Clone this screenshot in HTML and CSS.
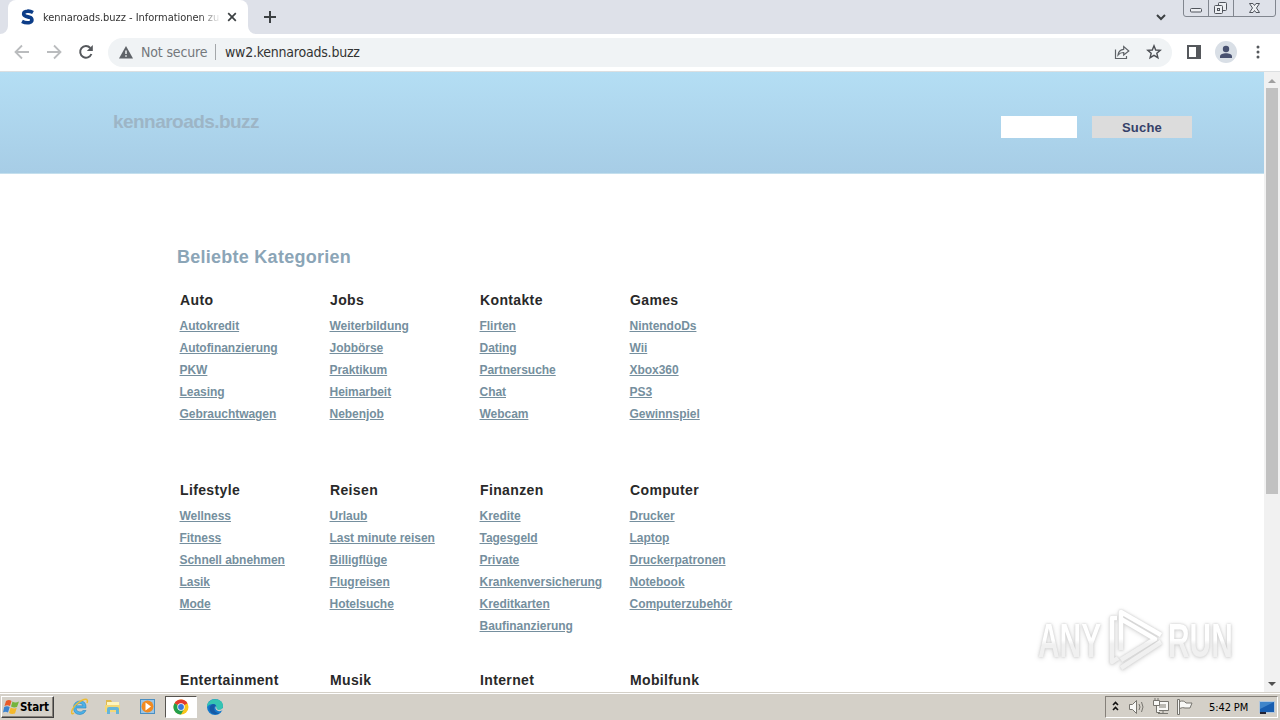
FILE: index.html
```html
<!DOCTYPE html>
<html lang="de">
<head>
<meta charset="utf-8">
<title>kennaroads.buzz - Informationen zum Thema</title>
<link rel="stylesheet" href="styles.css">
</head>
<body>
<div class="tabstrip">
  <div class="tab">
    <svg class="tab-foot left" width="8" height="8"><path d="M8 0V8H0A8 8 0 0 0 8 0Z" fill="#fff"/></svg>
    <svg class="tab-foot right" width="8" height="8"><path d="M0 0V8H8A8 8 0 0 1 0 0Z" fill="#fff"/></svg>
    <svg class="favicon" width="16" height="16" viewBox="0 0 16 16"><path d="M13 3.500C11 2.400 9 2 7.200 2.200C4.700 2.400 3.500 3.600 3.700 5.300C4 7.600 7 7.600 9.500 8.200C12.500 9 12.800 12.500 9.800 13.400C7.500 14 4.500 13.600 2 12.300" fill="none" stroke="#0c3d88" stroke-width="3.600"/></svg>
    <span class="tab-title">kennaroads.buzz - Informationen zu</span>
    <svg class="tab-close" width="10" height="10" viewBox="0 0 10 10"><path d="M1.200 1.200 8.800 8.800M8.800 1.200 1.200 8.800" stroke="#3c4043" stroke-width="1.700"/></svg>
  </div>
  <svg class="newtab" width="12" height="12" viewBox="0 0 12 12"><path d="M6 0V12M0 6H12" stroke="#3c4043" stroke-width="2"/></svg>
  <svg class="chevron" width="10" height="7" viewBox="0 0 10 7"><path d="M1 1 5 5 9 1" fill="none" stroke="#3c4043" stroke-width="2"/></svg>
  <svg class="winbuttons" width="94" height="18" viewBox="0 0 94 18"><path d="M.5 0V14Q.5 16.500 3 16.500H90Q92.500 16.500 92.500 14V0M25.500 0V16M50.500 0V16" fill="none" stroke="#81868f"/><g fill="#eceef2" stroke="#50545c"><rect x="7.500" y="8.500" width="11" height="3.500" rx="1"/><rect x="35.500" y="2.500" width="8" height="8" rx="1"/><rect x="31.500" y="5.500" width="8" height="8" rx="1"/><rect x="34.500" y="8.500" width="2" height="2"/><path d="M66.500 3.500H70L71.500 5.500 73 3.500H76.500L73.500 8 76.500 12.500H73L71.500 10.500 70 12.500H66.500L69.500 8Z"/></g></svg>
</div>
<div class="toolbar">
  <svg width="16" height="16" viewBox="0 0 16 16"><path d="M15 8H2M8 1.500 1.500 8 8 14.500" fill="none" stroke="#babcbe" stroke-width="1.800"/></svg>
  <svg width="16" height="16" viewBox="0 0 16 16"><path d="M1 8H14M8 1.500 14.500 8 8 14.500" fill="none" stroke="#babcbe" stroke-width="1.800"/></svg>
  <svg width="16" height="16" viewBox="0 0 16 16"><path d="M13.400 10A5.800 5.800 0 1 1 12.300 4" fill="none" stroke="#55585c" stroke-width="2"/><path d="M14.800 1V7H8.800Z" fill="#55585c"/></svg>
  <div class="omnibox">
    <svg class="warn" width="14" height="13" viewBox="0 0 14 13"><path d="M7 0 14 12.500H0Z" fill="#5f6368"/><path d="M7 4.500V8M7 9.200V10.800" stroke="#f1f3f4" stroke-width="1.500"/></svg>
    <span class="insecure">Not secure</span><i class="sep"></i><span class="url">ww2.kennaroads.buzz</span>
    <svg class="share" width="16" height="16" viewBox="0 0 16 16"><path d="M1.500 5.500V14.500H12.500V12M4 11C4.500 7.500 6.500 5.500 9.700 5.300V2.500L14.800 7 9.700 11V8.500C7.300 8.400 5.500 9.200 4 11Z" fill="none" stroke="#5f6368" stroke-width="1.200"/></svg>
    <svg class="star" width="16" height="16" viewBox="0 0 16 16"><path d="M8 1.800 9.700 6 14.200 6.300 10.800 9.200 11.900 13.700 8 11.300 4.100 13.700 5.200 9.200 1.800 6.300 6.300 6Z" fill="none" stroke="#4c4f54" stroke-width="1.400"/></svg>
  </div>
  <svg class="panel" width="14" height="14" viewBox="0 0 14 14"><path d="M1 1H13V13H1Z" fill="none" stroke="#55585c" stroke-width="2"/><path d="M9 0H14V14H9Z" fill="#55585c"/></svg>
  <svg class="avatar" width="22" height="22" viewBox="0 0 22 22"><circle cx="11" cy="11" r="11" fill="#d9dfe6"/><circle cx="11" cy="8" r="3.200" fill="#485170"/><path d="M5 17V15.500C5 11.200 17 11.200 17 15.500V17Z" fill="#485170"/></svg>
  <svg class="dots" width="4" height="14" viewBox="0 0 4 14"><g fill="#55585c"><circle cx="2" cy="2" r="1.500"/><circle cx="2" cy="7" r="1.500"/><circle cx="2" cy="12" r="1.500"/></g></svg>
</div>
<div class="viewport">
  <main class="page">
    <header class="hero"><div class="domain">kennaroads.buzz</div><div class="search"><input class="query" aria-label="Suche"><button class="submit">Suche</button></div></header>
    <h1 class="title">Beliebte Kategorien</h1>
    <div class="categories">
      <section><h2>Auto</h2><a>Autokredit</a><a>Autofinanzierung</a><a>PKW</a><a>Leasing</a><a>Gebrauchtwagen</a></section>
      <section><h2>Jobs</h2><a>Weiterbildung</a><a>Jobbörse</a><a>Praktikum</a><a>Heimarbeit</a><a>Nebenjob</a></section>
      <section><h2>Kontakte</h2><a>Flirten</a><a>Dating</a><a>Partnersuche</a><a>Chat</a><a>Webcam</a></section>
      <section><h2>Games</h2><a>NintendoDs</a><a>Wii</a><a>Xbox360</a><a>PS3</a><a>Gewinnspiel</a></section>
      <section><h2>Lifestyle</h2><a>Wellness</a><a>Fitness</a><a>Schnell abnehmen</a><a>Lasik</a><a>Mode</a></section>
      <section><h2>Reisen</h2><a>Urlaub</a><a>Last minute reisen</a><a>Billigflüge</a><a>Flugreisen</a><a>Hotelsuche</a></section>
      <section><h2>Finanzen</h2><a>Kredite</a><a>Tagesgeld</a><a>Private</a><a>Krankenversicherung</a><a>Kreditkarten</a><a>Baufinanzierung</a></section>
      <section><h2>Computer</h2><a>Drucker</a><a>Laptop</a><a>Druckerpatronen</a><a>Notebook</a><a>Computerzubehör</a></section>
      <section><h2>Entertainment</h2></section><section><h2>Musik</h2></section><section><h2>Internet</h2></section><section><h2>Mobilfunk</h2></section>
    </div>
  </main>
  <div class="scrollbar">
    <svg width="16" height="16"><path d="M4 11 8 7 12 11Z" fill="#a0a0a0"/></svg>
    <div class="thumb"></div>
    <svg class="down" width="16" height="16"><path d="M4 6 8 10 12 6Z" fill="#505050"/></svg>
  </div>
  <div class="watermark">
    <span>ANY</span>
    <svg width="60" height="66" viewBox="0 0 60 66"><defs><linearGradient id="fade" gradientUnits="userSpaceOnUse" x1="0" y1="0" x2="0" y2="66"><stop offset=".48" stop-color="#fff"/><stop offset=".56" stop-color="#f0f0f0"/></linearGradient></defs><g fill="none" stroke="url(#fade)" stroke-width="4.500" stroke-linejoin="round"><path d="M14 43V5L54 28M14 12 48 32 14 53"/><path d="M10 11H5V55L11 51M14 61 54 35"/></g></svg>
    <span class="run">RUN</span>
  </div>
</div>
<footer class="taskbar">
  <div class="start"><svg width="17" height="16" viewBox="0 0 17 16"><path d="M3 2Q6 0 8.500 2L7 7Q4.500 5.500 1.500 7Z" fill="#e85b2a"/><path d="M9.500 2.500Q12 4.500 16 2.500L14 8Q11 9 8 7.500Z" fill="#75b43d"/><path d="M1.200 8Q4 6.500 6.700 8L5 13.500Q2.500 12 0 13.500Z" fill="#3a83d0"/><path d="M7.700 8.500Q10.500 10 13.700 9L12 14.500Q8.500 15.500 6 14Z" fill="#f4b92d"/></svg><span>Start</span></div>
  <svg class="ql ie" width="18" height="18" viewBox="0 0 18 18"><path d="M15 10H5Q5 14 9 14Q11 14 12 12.500H15Q13 16.500 9 16.500Q2.500 16.500 2.500 9.500Q3 3 9.200 3Q15.500 3 15 10ZM5.200 7.800H12Q11.500 5.300 8.700 5.300Q6 5.300 5.200 7.800Z" fill="#4bb2e8" stroke="#2c84c0" stroke-width=".6"/><path d="M3 15C-1 18 0 10 7 5C13 0 18 0 16 5" fill="none" stroke="#edbd32" stroke-width="1.500"/></svg>
  <svg class="ql folder" width="18" height="18" viewBox="0 0 18 18"><path d="M2 2H7L8 4H15V14H2Z" fill="#e0b94e"/><path d="M3 4H15V9H3Z" fill="#fff5bd"/><path d="M1 7H16V14H1Z" fill="#f4d877"/><path d="M3 16V11Q3 9 5 9H13Q15 9 15 11V16H12V12H6V16Z" fill="#65b5d9"/></svg>
  <svg class="ql media" width="18" height="18" viewBox="0 0 18 18"><rect x="1.500" y="1.500" width="14" height="14" fill="#9bc5e6" stroke="#4a8fc2"/><circle cx="8.500" cy="8.500" r="6" fill="#f18a20"/><path d="M6.500 4.500 12 8.500 6.500 12.500Z" fill="#fff"/></svg>
  <div class="active"><svg width="16" height="16" viewBox="0 0 16 16"><circle cx="8" cy="8" r="7.500" fill="#f9c51b"/><path d="M8 8 1.500 4.250A7.500 7.500 0 0 1 14.500 4.250Z" fill="#e33b2e"/><path d="M8 8 1.500 4.250A7.500 7.500 0 0 0 8 15.500L11.200 9.800Z" fill="#239f4c"/><circle cx="8" cy="8" r="3.700" fill="#fff"/><circle cx="8" cy="8" r="2.900" fill="#3978db"/></svg></div>
  <svg class="ql edge" width="18" height="18" viewBox="0 0 18 18"><circle cx="9" cy="9" r="8" fill="#1478cb"/><path d="M1 9C1-1 17-1 17 8Q17 12 12.500 12Q9.500 12 10.500 9Q10 6 7 6Q3 6 1 9Z" fill="#35c4b2"/><path d="M7 6Q2 8 4 13Q7 18 13.500 15.500Q8 14.500 8 10Q8 8 10 8Q9.500 6 7 6Z" fill="#1559a5"/><path d="M10 8Q8 11 12 13Q15 13.500 17 12V10Q15 12 12.500 12Q10 11 10 8Z" fill="#d4d0c8"/></svg>
  <div class="tray">
    <svg width="96" height="22" viewBox="0 0 96 22"><path d="M7 9 9.500 6.500 12 9M7 14 9.500 11.500 12 14" fill="none" stroke="#111" stroke-width="1.600"/><g fill="#f8f8f6" stroke="#77756f"><path d="M23.500 8.500H26.500L30.500 4.500V17.500L26.500 13.500H23.500Z"/><path d="M33 8Q35 11 33 14M35.500 6Q38.500 11 35.500 16" fill="none"/><path d="M50.500 5.500H62.500V14.500H50.500ZM52 17.500H62M57 15V17"/><path d="M53 8H60V12H53Z" fill="#bbb9b3" stroke="none"/><path d="M47.500 4.500H53.500V9.500H47.500ZM49 2V5M52 2V5M50.500 10V16.500H54"/><path d="M71.500 3.500H73.500V18.500H71.500ZM73.500 5.500Q78 4 80 7H86L84 12H79Q77 11 73.500 12.500Z"/></g></svg>
    <span class="clock">5:42 PM</span>
    <svg class="desk" width="16" height="15" viewBox="0 0 16 15"><rect x=".5" y="1.500" width="15" height="11" fill="#185eb0" stroke="#b1c6dc"/><path d="M1 2H15L1 9Z" fill="#3f85ca"/><path d="M1 13H7" stroke="#223" stroke-width="2"/></svg>
  </div>
</footer>
</body>
</html>
```
FILE: styles.css
```css
*{box-sizing:border-box}
body{margin:0;width:1280px;height:720px;overflow:hidden;display:flex;flex-direction:column;background:#fff;font-family:"Liberation Sans",Arial,sans-serif}
svg{display:block;flex:none}
.tabstrip{height:34px;flex:none;background:#dee1e9;display:flex;align-items:flex-start;padding-left:8px}
.tab{position:relative;width:240px;height:34px;background:#fff;border-radius:8px 8px 0 0;display:flex;align-items:center;padding-left:12px}
.tab-foot{position:absolute;bottom:0}
.left{left:-8px}.right{right:-8px}
.tab-title{width:176px;margin-left:7px;white-space:nowrap;font:11px "DejaVu Sans Condensed","DejaVu Sans",sans-serif;letter-spacing:-.04px;color:#333;-webkit-mask-image:linear-gradient(90deg,#000 156px,transparent 178px);mask-image:linear-gradient(90deg,#000 156px,transparent 178px)}
.tab-close{margin-left:8px}
.newtab{margin:11px 0 0 16px}
.chevron{margin:14px 0 0 880px}
.winbuttons{margin-left:17px}
.toolbar{height:38px;flex:none;display:flex;align-items:center;gap:16px;padding:0 0 1px 14px;border-bottom:1px solid #dcdfe1}
.omnibox{width:1064px;height:29px;margin-left:-2px;border-radius:15px;background:#f0f3f5;display:flex;align-items:center;padding-left:11px}
.insecure,.url{font:14px "DejaVu Sans Condensed","DejaVu Sans",sans-serif;white-space:nowrap}
.insecure{margin-left:8px;width:67px;color:#74787c;letter-spacing:-.15px}
.sep{width:1px;height:16px;background:#a4a7aa;margin:0 9px 0 7px}
.url{color:#333;letter-spacing:-.22px}
.share{margin-left:auto}.star{margin:0 10px 0 16px}
.panel{margin-left:-1px}.avatar{margin-left:-2px}.dots{margin-left:3px}
.viewport{height:620px;flex:none;position:relative;display:flex;overflow:hidden}
.page{width:1264px;height:620px;overflow:hidden}
.hero{height:102px;background:linear-gradient(#b4def4,#a7cde6);border-bottom:1px solid #c4dfed;display:flex;align-items:center;justify-content:space-between;padding:0 72px 0 113px}
.domain{font-size:19px;line-height:24px;font-weight:bold;color:#9db5c6;letter-spacing:-.54px;margin-top:-2px}
.search{display:flex;gap:15px;padding-top:9px}
.query{width:76px;height:22px;border:0;background:#fff;padding:0}
.submit{width:100px;height:22px;border:0;padding:0;background:#dcdcdc;color:#354169;font:bold 13px "Liberation Sans",sans-serif;letter-spacing:.2px}
.title{margin:71px 0 0 177px;font-size:18px;line-height:24px;color:#8ba5b7;letter-spacing:.26px}
.categories{display:grid;grid-template-columns:repeat(4,150px);grid-auto-rows:190px;margin:20px 0 0 180px}
.categories section{display:flex;flex-direction:column;align-items:flex-start}
h2{margin:0 0 4px;font-size:14px;line-height:22px;color:#292929;letter-spacing:.36px}
.categories a{margin-left:-.5px;font-size:12px;line-height:22px;font-weight:bold;color:#758f9e;letter-spacing:-.04px;text-decoration:underline;white-space:nowrap}
.scrollbar{width:16px;background:#f1f1f1;display:flex;flex-direction:column}
.thumb{width:12px;height:406px;margin-left:2px;background:#c1c1c1}
.down{margin-top:auto}
.watermark{position:absolute;left:1038px;top:535px;display:flex;align-items:center;filter:drop-shadow(0 0 1px #ccc) drop-shadow(0 1px 2px #ddd)}
.watermark span{display:block;width:106px;margin-right:-44px;font:bold 49px/60px "Liberation Sans",sans-serif;transform:scaleX(.61);transform-origin:left;white-space:nowrap;color:transparent;background:linear-gradient(#fff 50%,#f0f0f0 58%);-webkit-background-clip:text;background-clip:text}
.watermark svg{margin-left:7px}
.watermark .run{margin-left:1px}
.taskbar{height:28px;flex:none;background:#d4d0c8;border-top:1px solid #d4d0c8;box-shadow:inset 0 1px #fff;display:flex;align-items:center;padding:1px 2px 0 1px}
.start{width:53px;height:22px;border:1px solid #fff;border-right-color:#404040;border-bottom-color:#404040;box-shadow:inset -1px -1px #858079;display:flex;align-items:center;padding-left:1px}
.start span{font:bold 11.5px "DejaVu Sans Condensed",sans-serif;letter-spacing:-.1px}
.ie{margin-left:17px}.folder{margin-left:15px}.media{margin-left:17px}.edge{margin-left:9px}
.active{width:32px;height:22px;margin-left:8px;background:#fff;border:1px solid #57544f;border-right-color:#fff;border-bottom-color:#fff;display:flex;align-items:center;justify-content:center}
.tray{width:173px;height:22px;margin-left:auto;border:1px solid #858079;border-right-color:#fff;border-bottom-color:#fff;display:flex;align-items:center}
.clock{margin-left:7px;width:45px;font:11px "DejaVu Sans Condensed",sans-serif;letter-spacing:-.1px;white-space:nowrap}
.desk{margin-left:5px}
```
